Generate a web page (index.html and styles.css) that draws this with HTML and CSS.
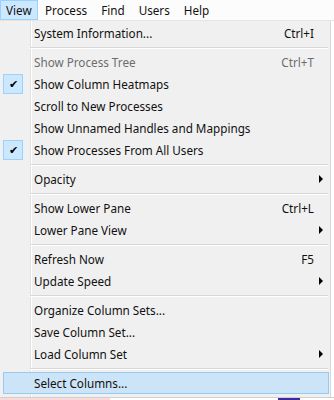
FILE: index.html
```html
<!DOCTYPE html>
<html lang="en">
  <head>
    <meta charset="UTF-8" />
    <meta name="viewport" content="width=device-width, initial-scale=1.0" />
    <title>View Menu</title>
    <link rel="stylesheet" href="styles.css">
  </head>
  <body>
    <div class="menubar">
      <span class="top-item active">View</span>
      <span class="top-item">Process</span>
      <span class="top-item">Find</span>
      <span class="top-item">Users</span>
      <span class="top-item">Help</span>
    </div>

    <div class="menu">
      <div class="item"><span class="check"></span><span class="label">System Information...</span><span class="shortcut">Ctrl+I</span><span class="arrow"></span></div>
      <div class="sep"></div>
      <div class="item disabled"><span class="check"></span><span class="label">Show Process Tree</span><span class="shortcut">Ctrl+T</span><span class="arrow"></span></div>
      <div class="item"><span class="check on">&#10004;</span><span class="label">Show Column Heatmaps</span><span class="shortcut"></span><span class="arrow"></span></div>
      <div class="item"><span class="check"></span><span class="label">Scroll to New Processes</span><span class="shortcut"></span><span class="arrow"></span></div>
      <div class="item"><span class="check"></span><span class="label">Show Unnamed Handles and Mappings</span><span class="shortcut"></span><span class="arrow"></span></div>
      <div class="item"><span class="check on">&#10004;</span><span class="label">Show Processes From All Users</span><span class="shortcut"></span><span class="arrow"></span></div>
      <div class="sep"></div>
      <div class="item"><span class="check"></span><span class="label">Opacity</span><span class="shortcut"></span><span class="arrow sub"></span></div>
      <div class="sep"></div>
      <div class="item"><span class="check"></span><span class="label">Show Lower Pane</span><span class="shortcut">Ctrl+L</span><span class="arrow"></span></div>
      <div class="item"><span class="check"></span><span class="label">Lower Pane View</span><span class="shortcut"></span><span class="arrow sub"></span></div>
      <div class="sep"></div>
      <div class="item"><span class="check"></span><span class="label">Refresh Now</span><span class="shortcut">F5</span><span class="arrow"></span></div>
      <div class="item"><span class="check"></span><span class="label">Update Speed</span><span class="shortcut"></span><span class="arrow sub"></span></div>
      <div class="sep"></div>
      <div class="item"><span class="check"></span><span class="label">Organize Column Sets...</span><span class="shortcut"></span><span class="arrow"></span></div>
      <div class="item"><span class="check"></span><span class="label">Save Column Set...</span><span class="shortcut"></span><span class="arrow"></span></div>
      <div class="item"><span class="check"></span><span class="label">Load Column Set</span><span class="shortcut"></span><span class="arrow sub"></span></div>
      <div class="sep"></div>
      <div class="item hover"><span class="check"></span><span class="label">Select Columns...</span><span class="shortcut"></span><span class="arrow"></span></div>
    </div>

    <div class="below">
      <span class="pink"></span>
      <span class="mark"></span>
    </div>
  </body>
</html>
```

FILE: styles.css
```css
body {
  margin: 0;
  font-family: "Noto Sans", Arial, sans-serif;
  font-size: 11.7px;
  color: #111;
  background: #fff;
  width: 334px;
  height: 400px;
  overflow: hidden;
}
.menubar {
  display: flex;
  height: 20px;
  background: #fcfcfc;
  border-bottom: 1px solid #e5e5e5;
}
.top-item {
  line-height: 18px;
  padding: 0 6px 0 6px;
  border: 1px solid transparent;
}
.top-item.active {
  background: #cce8ff;
  border-color: #99d1ff;
  padding-left: 5px;
  width: 25px;
}
.menu {
  width: 330px;
  padding: 1px 0 3px;
  border-right: 1px solid #d9d9d9;
  background: linear-gradient(to right, transparent 30px, #e2e2e2 30px, #e2e2e2 31px, #fff 31px, #fff 32px, transparent 32px), #f0f0f0;
}
.item {
  display: flex;
  align-items: center;
  height: 22px;
  margin: 0 1px 0 3px;
  border: 1px solid transparent;
  box-sizing: border-box;
}
.item.disabled {
  color: #6d6d6d;
}
.item.hover {
  background: #cce4f7;
  border-color: #99c9ef;
}
.check {
  width: 20px;
  height: 20px;
  margin-left: -1px;
  margin-right: 11px;
  box-sizing: border-box;
  font-size: 11px;
  line-height: 18px;
  text-align: center;
  color: #000;
}
.check.on {
  background: #cce8ff;
  border: 1px solid #99d1ff;
}
.label {
  flex: 1;
}
.shortcut {
  padding-right: 5px;
}
.arrow {
  width: 0;
  height: 0;
  margin-right: 5px;
  border-left: 4px solid transparent;
  border-top: 4px solid transparent;
  border-bottom: 4px solid transparent;
}
.arrow.sub {
  border-left-color: #000;
}
.sep {
  height: 7px;
  margin-left: 30px;
  margin-right: 2px;
  box-sizing: border-box;
  padding-top: 3px;
}
.sep::before {
  content: "";
  display: block;
  border-top: 1px solid #d7d7d7;
  border-bottom: 1px solid #fff;
}
.below {
  display: flex;
  height: 10px;
  border-top: 1px solid #cfcfcf;
}
.pink {
  width: 110px;
  background: #f8dada;
}
.mark {
  width: 22px;
  height: 2px;
  margin-left: 168px;
  background: #3b2aa0;
}
```
